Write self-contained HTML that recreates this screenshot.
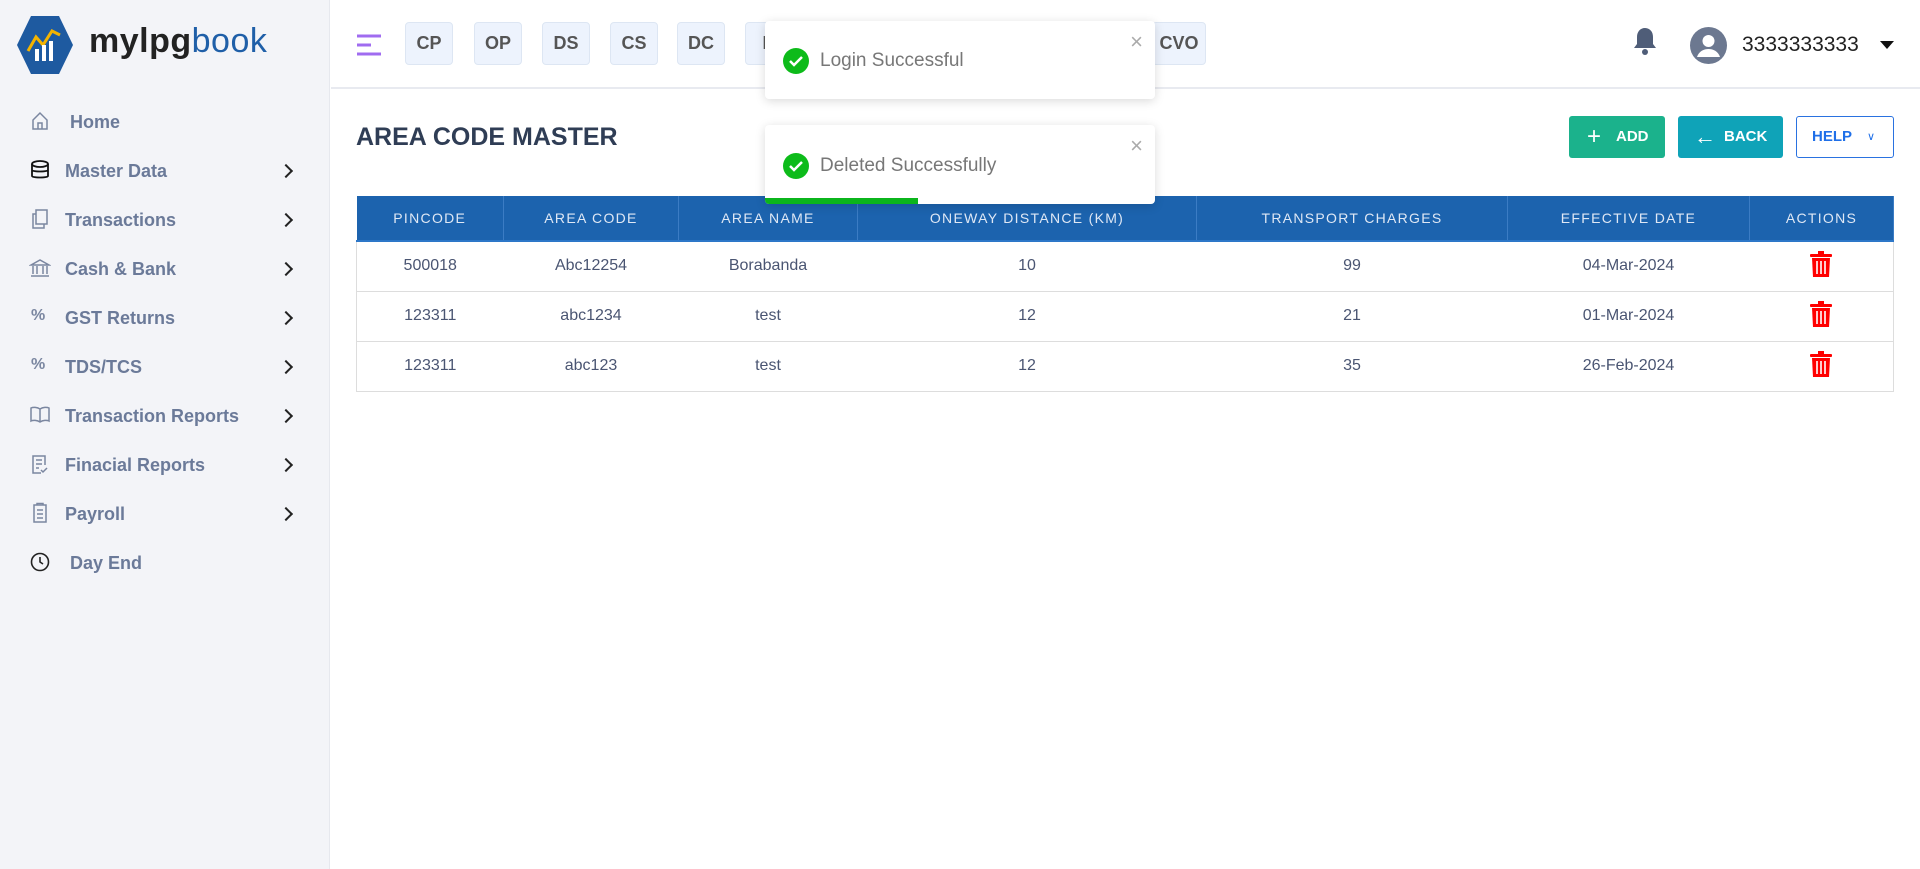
<!DOCTYPE html>
<html><head><meta charset="utf-8"><style>
*{box-sizing:border-box;margin:0;padding:0}
body{width:1920px;height:869px;overflow:hidden;background:#fff;font-family:"Liberation Sans",sans-serif;position:relative}
.sb{position:absolute;left:0;top:0;width:330px;height:869px;background:#f3f4f8;border-right:1px solid #e6e8ee}
.logo{position:absolute;left:89px;top:22px;font-size:34px;font-weight:bold;color:#222;letter-spacing:0.5px}
.logo span{color:#1f5fa8;font-weight:normal}
.mi{position:absolute;left:0;width:330px;height:40px;font-size:18px;font-weight:bold;color:#6b7a99}
.mi .ic{position:absolute;left:29px;top:8px;width:22px;height:22px}
.mi .t{position:absolute;left:65px;top:10px}
.mi .ch{position:absolute;left:281px;top:10px;width:10px;height:10px;border-right:2px solid #222;border-top:2px solid #222;transform:rotate(45deg);top:15px}
.hd{position:absolute;left:331px;top:0;right:0;height:89px;border-bottom:2px solid #e8eaf0}
.chip{position:absolute;top:22px;width:48px;height:43px;background:#edf3fd;border:1px solid #dde6f3;border-radius:4px;font-size:18px;font-weight:bold;color:#555;text-align:center;line-height:41px}
.toast{position:absolute;left:765px;width:390px;background:#fff;border-radius:4px;box-shadow:0 2px 10px rgba(0,0,0,.15);z-index:5}
.toast .ck{position:absolute;left:18px;width:26px;height:26px;border-radius:50%;background:#0dbb1a}
.toast .tx{position:absolute;left:55px;font-size:19px;color:#777}
.toast .x{position:absolute;right:12px;top:8px;font-size:22px;color:#aaa}
.btn{position:absolute;top:116px;height:42px;border-radius:3px;color:#fff;font-weight:bold;font-size:15px;line-height:42px}
table{position:absolute;left:356px;top:196px;width:1538px;border-collapse:collapse}
th{background:#1c63ae;color:#dfe8f5;font-weight:normal;font-size:14px;letter-spacing:1.3px;height:45px;border-right:1px solid #3b7cc4;border-bottom:2px solid #2d77c8}
td{height:50px;text-align:center;font-size:16px;color:#4a5572;border-bottom:1px solid #ddd}
tr td:first-child{border-left:1px solid #ddd}tr td:last-child{border-right:1px solid #ddd}
</style></head><body>
<div class="sb">
<svg style="position:absolute;left:16px;top:15px" width="58" height="60" viewBox="0 0 58 60"><polygon points="15,1 43,1 57,30 43,59 15,59 1,30" fill="#1e5aa0"/><polyline points="12,36 20,22 27,30 36,16 44,20" fill="none" stroke="#f5b400" stroke-width="3"/><rect x="19" y="34" width="4" height="12" fill="#fff"/><rect x="26" y="30" width="4" height="16" fill="#fff"/><rect x="33" y="26" width="4" height="20" fill="#fff"/></svg>
<div class="logo">mylpg<span>book</span></div>
<div class="mi" style="top:102px"><svg class="ic" viewBox="0 0 22 22"><path d="M4 10 L11 3 L18 10 V19 H4Z M9 19 V13 H13 V19" fill="none" stroke="#7a86a0" stroke-width="1.5"/></svg><span class="t" style="left:70px">Home</span></div>
<div class="mi" style="top:151px"><svg class="ic" viewBox="0 0 22 22"><ellipse cx="11" cy="5" rx="8" ry="3" fill="none" stroke="#111" stroke-width="1.8"/><path d="M3 5v12c0 2 16 2 16 0V5M3 11c0 2 16 2 16 0" fill="none" stroke="#111" stroke-width="1.8"/></svg><span class="t">Master Data</span><i class="ch"></i></div>
<div class="mi" style="top:200px"><svg class="ic" viewBox="0 0 22 22"><rect x="7" y="2" width="11" height="14" fill="none" stroke="#7a86a0" stroke-width="1.5"/><path d="M7 6H4v14h11v-4" fill="none" stroke="#7a86a0" stroke-width="1.5"/></svg><span class="t">Transactions</span><i class="ch"></i></div>
<div class="mi" style="top:249px"><svg class="ic" viewBox="0 0 22 22"><path d="M2 8 L11 3 L20 8Z M4 9v8M8 9v8M14 9v8M18 9v8M2 19h18" fill="none" stroke="#7a86a0" stroke-width="1.5"/></svg><span class="t">Cash &amp; Bank</span><i class="ch"></i></div>
<div class="mi" style="top:298px"><span class="ic" style="top:9px;left:31px;font-size:16px;color:#7a86a0">%</span><span class="t">GST Returns</span><i class="ch"></i></div>
<div class="mi" style="top:347px"><span class="ic" style="top:9px;left:31px;font-size:16px;color:#7a86a0">%</span><span class="t">TDS/TCS</span><i class="ch"></i></div>
<div class="mi" style="top:396px"><svg class="ic" viewBox="0 0 22 22"><path d="M11 5C8 3 4 3 2 4v13c2-1 6-1 9 1 3-2 7-2 9-1V4c-2-1-6-1-9 1zM11 5v13" fill="none" stroke="#7a86a0" stroke-width="1.5"/></svg><span class="t">Transaction Reports</span><i class="ch"></i></div>
<div class="mi" style="top:445px"><svg class="ic" viewBox="0 0 22 22"><path d="M16 12V3H4v17h8M7 7h6M7 11h6M7 15h3M12 17l2 2 4-4" fill="none" stroke="#7a86a0" stroke-width="1.5"/></svg><span class="t">Finacial Reports</span><i class="ch"></i></div>
<div class="mi" style="top:494px"><svg class="ic" viewBox="0 0 22 22"><rect x="5" y="3" width="12" height="17" fill="none" stroke="#7a86a0" stroke-width="1.5"/><path d="M8 3V1.5h6V3M8 8h6M8 12h6M8 16h6" fill="none" stroke="#7a86a0" stroke-width="1.5"/></svg><span class="t">Payroll</span><i class="ch"></i></div>
<div class="mi" style="top:543px"><svg class="ic" viewBox="0 0 22 22"><circle cx="11" cy="11" r="8.5" fill="none" stroke="#222" stroke-width="1.6"/><path d="M11 6v5l3 2" fill="none" stroke="#222" stroke-width="1.6"/></svg><span class="t" style="left:70px">Day End</span></div>
</div>
<div class="hd"></div>
<svg style="position:absolute;left:356px;top:34px" width="26" height="22"><path d="M1 2h24M1 11h14M1 20h24" stroke="#a06cf0" stroke-width="3"/></svg>
<div class="chip" style="left:405px">CP</div><div class="chip" style="left:474px">OP</div><div class="chip" style="left:542px">DS</div><div class="chip" style="left:610px">CS</div><div class="chip" style="left:677px">DC</div><div class="chip" style="left:745px">N</div><div class="chip" style="left:1152px;width:54px">CVO</div>
<svg style="position:absolute;left:1632px;top:26px" width="26" height="30" viewBox="0 0 26 30"><path d="M13 2c-5 0-8 4-8 9v7l-3 4h22l-3-4v-7c0-5-3-9-8-9z" fill="#4f5d78"/><circle cx="13" cy="26" r="3" fill="#4f5d78"/></svg>
<svg style="position:absolute;left:1690px;top:27px" width="37" height="37" viewBox="0 0 37 37"><circle cx="18.5" cy="18.5" r="18.5" fill="#6c7890"/><circle cx="18.5" cy="14" r="6" fill="#fff"/><path d="M7 30c2-6 7-8 11.5-8s9.5 2 11.5 8" fill="#fff"/></svg>
<div style="position:absolute;left:1742px;top:33px;font-size:21px;color:#222">3333333333</div>
<div style="position:absolute;left:1880px;top:41px;border-left:7px solid transparent;border-right:7px solid transparent;border-top:8px solid #111"></div>
<div style="position:absolute;left:356px;top:123px;font-size:25px;font-weight:bold;color:#2f3d55">AREA CODE MASTER</div>
<div class="btn" style="left:1569px;width:96px;background:#1bb28c"><span style="position:absolute;left:18px;font-size:24px;font-weight:normal">+</span><span style="position:absolute;left:47px">ADD</span></div>
<div class="btn" style="left:1678px;width:105px;background:#0fa3b8"><span style="position:absolute;left:16px;font-size:22px;font-weight:normal">←</span><span style="position:absolute;left:46px">BACK</span></div>
<div class="btn" style="left:1796px;width:98px;background:#fff;border:1px solid #2a72e0;color:#1f6fe8;line-height:40px"><span style="position:absolute;left:15px">HELP</span><span style="position:absolute;left:70px;font-size:11px;font-weight:normal">∨</span></div>
<div class="toast" style="top:21px;height:78px"><div class="ck" style="top:27px"><svg width="26" height="26"><path d="M7 13l4 4 8-8" fill="none" stroke="#fff" stroke-width="2.5"/></svg></div><div class="tx" style="top:29px">Login Successful</div><div class="x">×</div></div>
<div class="toast" style="top:125px;height:79px;overflow:hidden"><div class="ck" style="top:28px"><svg width="26" height="26"><path d="M7 13l4 4 8-8" fill="none" stroke="#fff" stroke-width="2.5"/></svg></div><div class="tx" style="top:30px">Deleted Successfully</div><div class="x">×</div><div style="position:absolute;left:0;bottom:0;width:153px;height:6px;background:#0bb51c"></div></div>
<table>
<tr><th style="width:147px">PINCODE</th><th style="width:175px">AREA CODE</th><th style="width:179px">AREA NAME</th><th style="width:339px">ONEWAY DISTANCE (KM)</th><th style="width:311px">TRANSPORT CHARGES</th><th style="width:242px">EFFECTIVE DATE</th><th>ACTIONS</th></tr>
<tr><td>500018</td><td>Abc12254</td><td>Borabanda</td><td>10</td><td>99</td><td>04-Mar-2024</td><td><svg width="22" height="26" viewBox="0 0 22 26"><rect x="0" y="3" width="22" height="3" rx="1" fill="#f00"/><rect x="8" y="0" width="6" height="4" fill="#f00"/><path d="M2 7h18l-1 19H3z" fill="#f00"/><path d="M7 10v13M11 10v13M15 10v13" stroke="#fff" stroke-width="1.6"/></svg></td></tr>
<tr><td>123311</td><td>abc1234</td><td>test</td><td>12</td><td>21</td><td>01-Mar-2024</td><td><svg width="22" height="26" viewBox="0 0 22 26"><rect x="0" y="3" width="22" height="3" rx="1" fill="#f00"/><rect x="8" y="0" width="6" height="4" fill="#f00"/><path d="M2 7h18l-1 19H3z" fill="#f00"/><path d="M7 10v13M11 10v13M15 10v13" stroke="#fff" stroke-width="1.6"/></svg></td></tr>
<tr><td>123311</td><td>abc123</td><td>test</td><td>12</td><td>35</td><td>26-Feb-2024</td><td><svg width="22" height="26" viewBox="0 0 22 26"><rect x="0" y="3" width="22" height="3" rx="1" fill="#f00"/><rect x="8" y="0" width="6" height="4" fill="#f00"/><path d="M2 7h18l-1 19H3z" fill="#f00"/><path d="M7 10v13M11 10v13M15 10v13" stroke="#fff" stroke-width="1.6"/></svg></td></tr>
</table>
</body></html>
